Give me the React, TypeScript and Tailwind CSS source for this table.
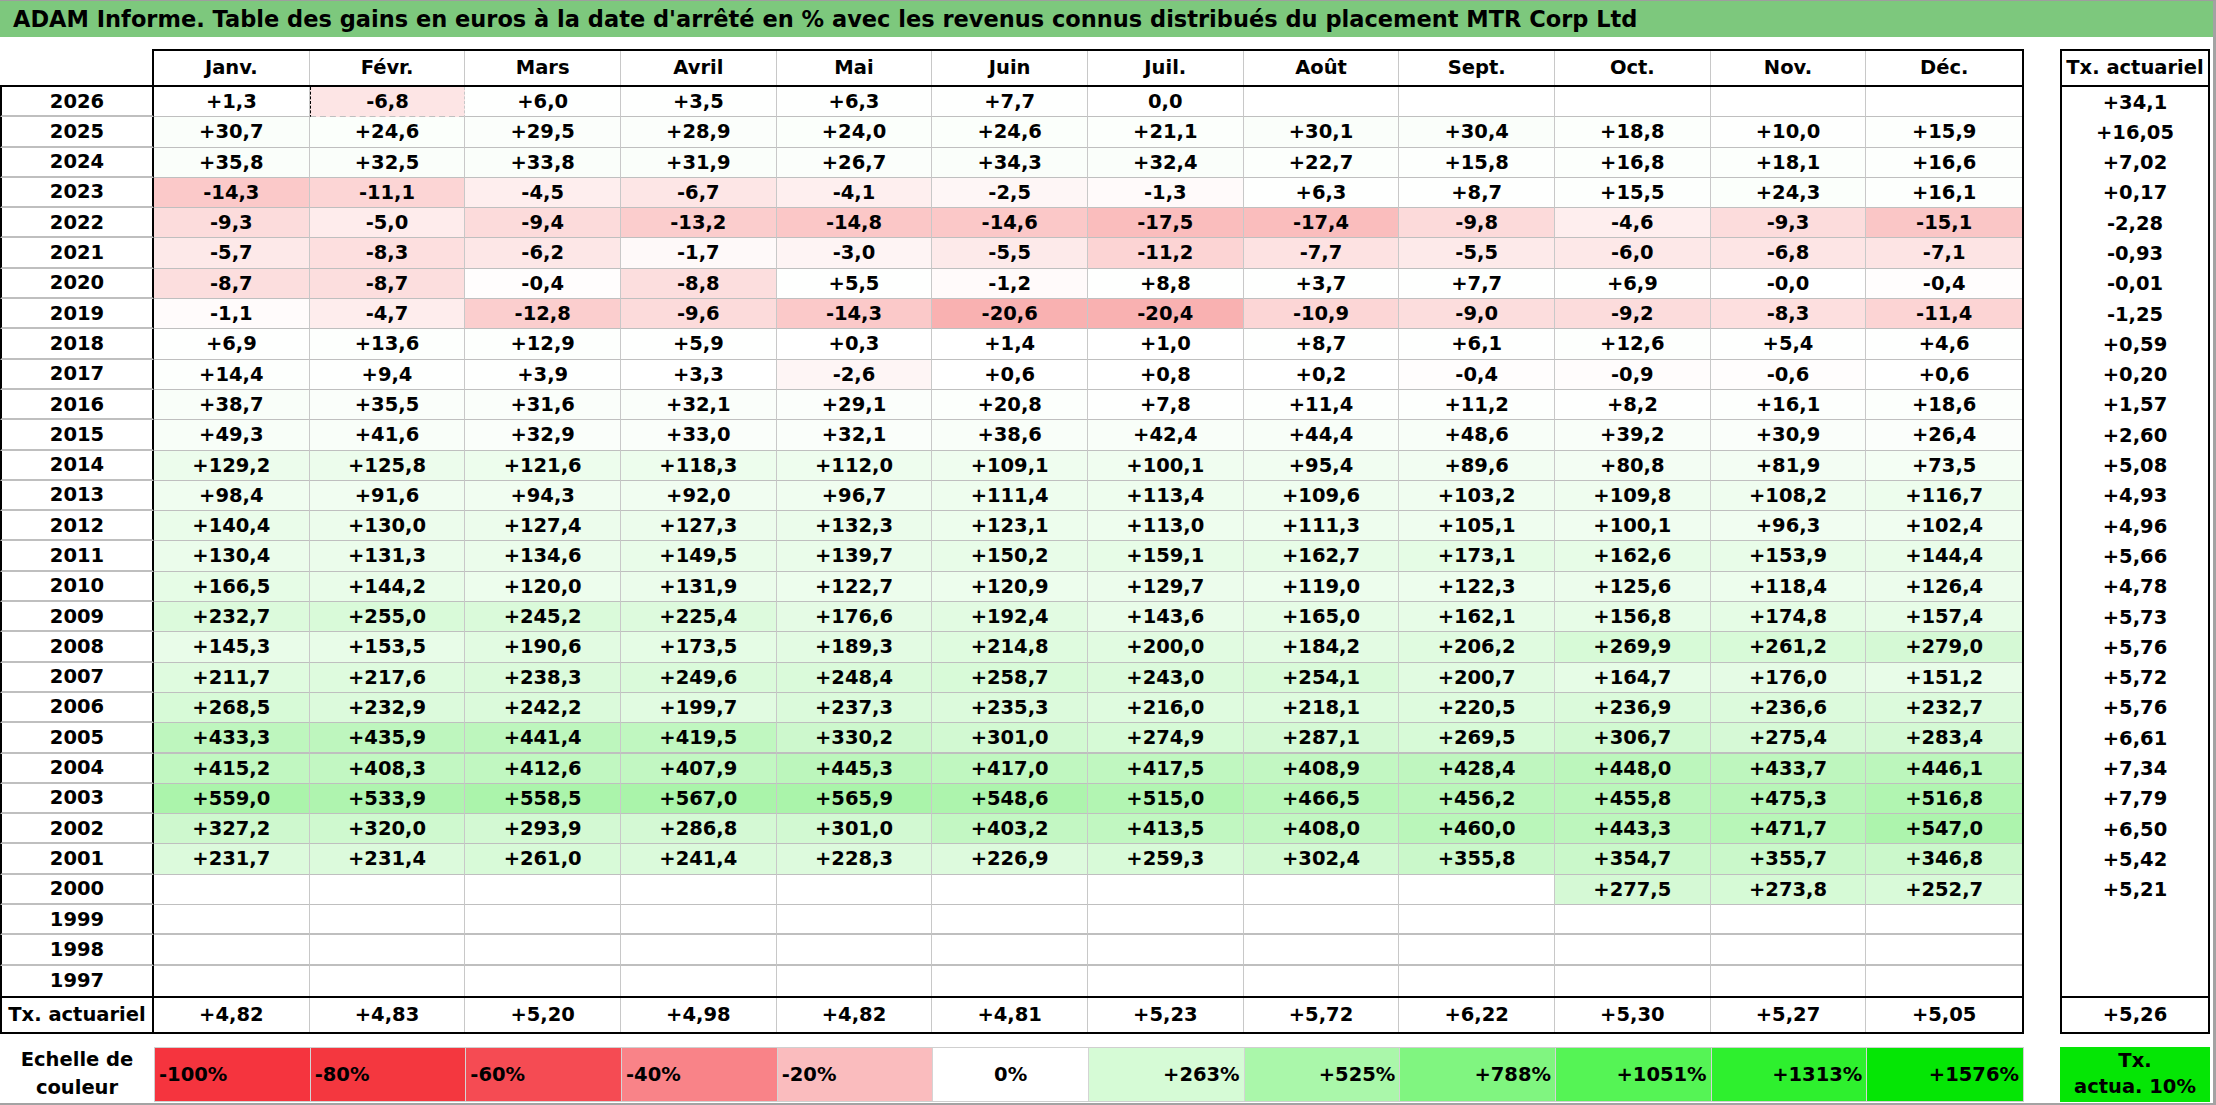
const months = ["Janv.", "Févr.", "Mars", "Avril", "Mai", "Juin", "Juil.", "Août", "Sept.", "Oct.", "Nov.", "Déc."];

// year, 12 monthly values, tx actuariel
const rows: [string, string[], string][] = [
  ["2026", ["+1,3", "-6,8", "+6,0", "+3,5", "+6,3", "+7,7", "0,0", "", "", "", "", ""], "+34,1"],
  ["2025", ["+30,7", "+24,6", "+29,5", "+28,9", "+24,0", "+24,6", "+21,1", "+30,1", "+30,4", "+18,8", "+10,0", "+15,9"], "+16,05"],
  ["2024", ["+35,8", "+32,5", "+33,8", "+31,9", "+26,7", "+34,3", "+32,4", "+22,7", "+15,8", "+16,8", "+18,1", "+16,6"], "+7,02"],
  ["2023", ["-14,3", "-11,1", "-4,5", "-6,7", "-4,1", "-2,5", "-1,3", "+6,3", "+8,7", "+15,5", "+24,3", "+16,1"], "+0,17"],
  ["2022", ["-9,3", "-5,0", "-9,4", "-13,2", "-14,8", "-14,6", "-17,5", "-17,4", "-9,8", "-4,6", "-9,3", "-15,1"], "-2,28"],
  ["2021", ["-5,7", "-8,3", "-6,2", "-1,7", "-3,0", "-5,5", "-11,2", "-7,7", "-5,5", "-6,0", "-6,8", "-7,1"], "-0,93"],
  ["2020", ["-8,7", "-8,7", "-0,4", "-8,8", "+5,5", "-1,2", "+8,8", "+3,7", "+7,7", "+6,9", "-0,0", "-0,4"], "-0,01"],
  ["2019", ["-1,1", "-4,7", "-12,8", "-9,6", "-14,3", "-20,6", "-20,4", "-10,9", "-9,0", "-9,2", "-8,3", "-11,4"], "-1,25"],
  ["2018", ["+6,9", "+13,6", "+12,9", "+5,9", "+0,3", "+1,4", "+1,0", "+8,7", "+6,1", "+12,6", "+5,4", "+4,6"], "+0,59"],
  ["2017", ["+14,4", "+9,4", "+3,9", "+3,3", "-2,6", "+0,6", "+0,8", "+0,2", "-0,4", "-0,9", "-0,6", "+0,6"], "+0,20"],
  ["2016", ["+38,7", "+35,5", "+31,6", "+32,1", "+29,1", "+20,8", "+7,8", "+11,4", "+11,2", "+8,2", "+16,1", "+18,6"], "+1,57"],
  ["2015", ["+49,3", "+41,6", "+32,9", "+33,0", "+32,1", "+38,6", "+42,4", "+44,4", "+48,6", "+39,2", "+30,9", "+26,4"], "+2,60"],
  ["2014", ["+129,2", "+125,8", "+121,6", "+118,3", "+112,0", "+109,1", "+100,1", "+95,4", "+89,6", "+80,8", "+81,9", "+73,5"], "+5,08"],
  ["2013", ["+98,4", "+91,6", "+94,3", "+92,0", "+96,7", "+111,4", "+113,4", "+109,6", "+103,2", "+109,8", "+108,2", "+116,7"], "+4,93"],
  ["2012", ["+140,4", "+130,0", "+127,4", "+127,3", "+132,3", "+123,1", "+113,0", "+111,3", "+105,1", "+100,1", "+96,3", "+102,4"], "+4,96"],
  ["2011", ["+130,4", "+131,3", "+134,6", "+149,5", "+139,7", "+150,2", "+159,1", "+162,7", "+173,1", "+162,6", "+153,9", "+144,4"], "+5,66"],
  ["2010", ["+166,5", "+144,2", "+120,0", "+131,9", "+122,7", "+120,9", "+129,7", "+119,0", "+122,3", "+125,6", "+118,4", "+126,4"], "+4,78"],
  ["2009", ["+232,7", "+255,0", "+245,2", "+225,4", "+176,6", "+192,4", "+143,6", "+165,0", "+162,1", "+156,8", "+174,8", "+157,4"], "+5,73"],
  ["2008", ["+145,3", "+153,5", "+190,6", "+173,5", "+189,3", "+214,8", "+200,0", "+184,2", "+206,2", "+269,9", "+261,2", "+279,0"], "+5,76"],
  ["2007", ["+211,7", "+217,6", "+238,3", "+249,6", "+248,4", "+258,7", "+243,0", "+254,1", "+200,7", "+164,7", "+176,0", "+151,2"], "+5,72"],
  ["2006", ["+268,5", "+232,9", "+242,2", "+199,7", "+237,3", "+235,3", "+216,0", "+218,1", "+220,5", "+236,9", "+236,6", "+232,7"], "+5,76"],
  ["2005", ["+433,3", "+435,9", "+441,4", "+419,5", "+330,2", "+301,0", "+274,9", "+287,1", "+269,5", "+306,7", "+275,4", "+283,4"], "+6,61"],
  ["2004", ["+415,2", "+408,3", "+412,6", "+407,9", "+445,3", "+417,0", "+417,5", "+408,9", "+428,4", "+448,0", "+433,7", "+446,1"], "+7,34"],
  ["2003", ["+559,0", "+533,9", "+558,5", "+567,0", "+565,9", "+548,6", "+515,0", "+466,5", "+456,2", "+455,8", "+475,3", "+516,8"], "+7,79"],
  ["2002", ["+327,2", "+320,0", "+293,9", "+286,8", "+301,0", "+403,2", "+413,5", "+408,0", "+460,0", "+443,3", "+471,7", "+547,0"], "+6,50"],
  ["2001", ["+231,7", "+231,4", "+261,0", "+241,4", "+228,3", "+226,9", "+259,3", "+302,4", "+355,8", "+354,7", "+355,7", "+346,8"], "+5,42"],
  ["2000", ["", "", "", "", "", "", "", "", "", "+277,5", "+273,8", "+252,7"], "+5,21"],
  ["1999", ["", "", "", "", "", "", "", "", "", "", "", ""], ""],
  ["1998", ["", "", "", "", "", "", "", "", "", "", "", ""], ""],
  ["1997", ["", "", "", "", "", "", "", "", "", "", "", ""], ""],
];

const totals = ["+4,82", "+4,83", "+5,20", "+4,98", "+4,82", "+4,81", "+5,23", "+5,72", "+6,22", "+5,30", "+5,27", "+5,05"];

const scale: { label: string; bg: string; align: string }[] = [
  { label: "-100%", bg: "bg-[#f5343e]", align: "justify-start pl-1" },
  { label: "-80%", bg: "bg-[#f4373f]", align: "justify-start pl-1" },
  { label: "-60%", bg: "bg-[#f54b53]", align: "justify-start pl-1" },
  { label: "-40%", bg: "bg-[#f98388]", align: "justify-start pl-1" },
  { label: "-20%", bg: "bg-[#fabcbe]", align: "justify-start pl-1" },
  { label: "0%", bg: "bg-white", align: "justify-center" },
  { label: "+263%", bg: "bg-[#d6fbd6]", align: "justify-end pr-1" },
  { label: "+525%", bg: "bg-[#aaf7aa]", align: "justify-end pr-1" },
  { label: "+788%", bg: "bg-[#80f580]", align: "justify-end pr-1" },
  { label: "+1051%", bg: "bg-[#55f455]", align: "justify-end pr-1" },
  { label: "+1313%", bg: "bg-[#2ef02e]", align: "justify-end pr-1" },
  { label: "+1576%", bg: "bg-[#05e605]", align: "justify-end pr-1" },
];

function cellColor(s: string) {
  if (!s) return "#ffffff";
  const v = parseFloat(s.replace(",", "."));
  if (v < 0) {
    const t = -v;
    const r = Math.round(255 - 0.3 * t);
    const gb = Math.max(60, Math.round(255 - 3.8 * t));
    return `rgb(${r},${gb},${gb})`;
  }
  const rb = Math.max(0, Math.round(255 - 0.15 * v));
  const g = Math.round(255 - 0.02 * v);
  return `rgb(${rb},${g},${rb})`;
}

export default function App() {
  return (
    <div className="w-[2216px] h-[1105px] bg-white overflow-hidden border-t border-t-[#9e9e9e] border-r-[3px] border-r-[#a3a3a3] border-b-2 border-b-[#a3a3a3] font-['DejaVu_Sans',sans-serif] font-bold text-black text-[19.5px]">
      <div className="h-[36px] bg-[#7dc87d] flex items-center pl-[13px] text-[22.5px] leading-none">
        ADAM Informe. Table des gains en euros à la date d'arrêté en % avec les revenus connus distribués du placement MTR Corp Ltd
      </div>

      <div className="mt-[12px] w-[2210px]">
        {/* header */}
        <div className="flex h-[38px]">
          <div className="w-[154px] border-r-2 border-r-black border-b-2 border-b-black" />
          <div className="flex-1 grid grid-cols-12 border-y-2 border-black border-r-2">
            {months.map((m, i) => (
              <div
                key={m}
                className={`flex items-center justify-center ${i < 11 ? "border-r border-r-[#c8c8c8]" : ""}`}
              >
                {m}
              </div>
            ))}
          </div>
          <div className="w-[36px]" />
          <div className="w-[150px] border-2 border-black flex items-center justify-center whitespace-nowrap">Tx. actuariel</div>
        </div>

        {/* years */}
        {rows.map(([year, vals, tx], r) => {
          const last = r === rows.length - 1;
          return (
            <div key={year} className="flex h-[30.3px]">
              <div
                className={`w-[154px] border-l-2 border-l-black border-r-2 border-r-black flex items-center justify-center ${last ? "" : "border-b-2 border-b-[#bfbfbf]"}`}
              >
                {year}
              </div>
              <div className="flex-1 grid grid-cols-12 border-r-2 border-r-black">
                {vals.map((v, i) => (
                  <div
                    key={i}
                    style={{ backgroundColor: cellColor(v) }}
                    className={`flex items-center justify-center ${last ? "" : "border-b-2 border-b-[#bfbfbf]"} ${i < 11 ? "border-r border-r-[#c8c8c8]" : ""} ${r === 0 && i === 1 ? "border-l border-dashed border-l-black" : ""}`}
                  >
                    {v}
                  </div>
                ))}
              </div>
              <div className="w-[36px]" />
              <div className="w-[150px] border-x-2 border-black flex items-center justify-center">{tx}</div>
            </div>
          );
        })}

        {/* totals */}
        <div className="flex h-[38px]">
          <div className="w-[154px] border-2 border-black flex items-center justify-center whitespace-nowrap">Tx. actuariel</div>
          <div className="flex-1 grid grid-cols-12 border-y-2 border-r-2 border-black">
            {totals.map((t, i) => (
              <div key={i} className={`flex items-center justify-center ${i < 11 ? "border-r border-r-[#c8c8c8]" : ""}`}>
                {t}
              </div>
            ))}
          </div>
          <div className="w-[36px]" />
          <div className="w-[150px] border-2 border-black flex items-center justify-center">+5,26</div>
        </div>

        {/* colour scale */}
        <div className="flex h-[55px] mt-[13px]">
          <div className="w-[154px] flex flex-col items-center justify-center leading-[28px]">
            <span>Echelle de</span>
            <span>couleur</span>
          </div>
          <div className="flex-1 grid grid-cols-12 border border-[#cfcfcf]">
            {scale.map((s, i) => (
              <div
                key={s.label}
                className={`flex items-center ${s.align} ${s.bg} ${i < 11 ? "border-r border-r-[#d4d4d4]" : ""}`}
              >
                {s.label}
              </div>
            ))}
          </div>
          <div className="w-[36px]" />
          <div className="w-[150px] bg-[#05e605] flex flex-col items-center justify-center leading-[26px]">
            <span>Tx.</span>
            <span>actua. 10%</span>
          </div>
        </div>
      </div>
    </div>
  );
}
